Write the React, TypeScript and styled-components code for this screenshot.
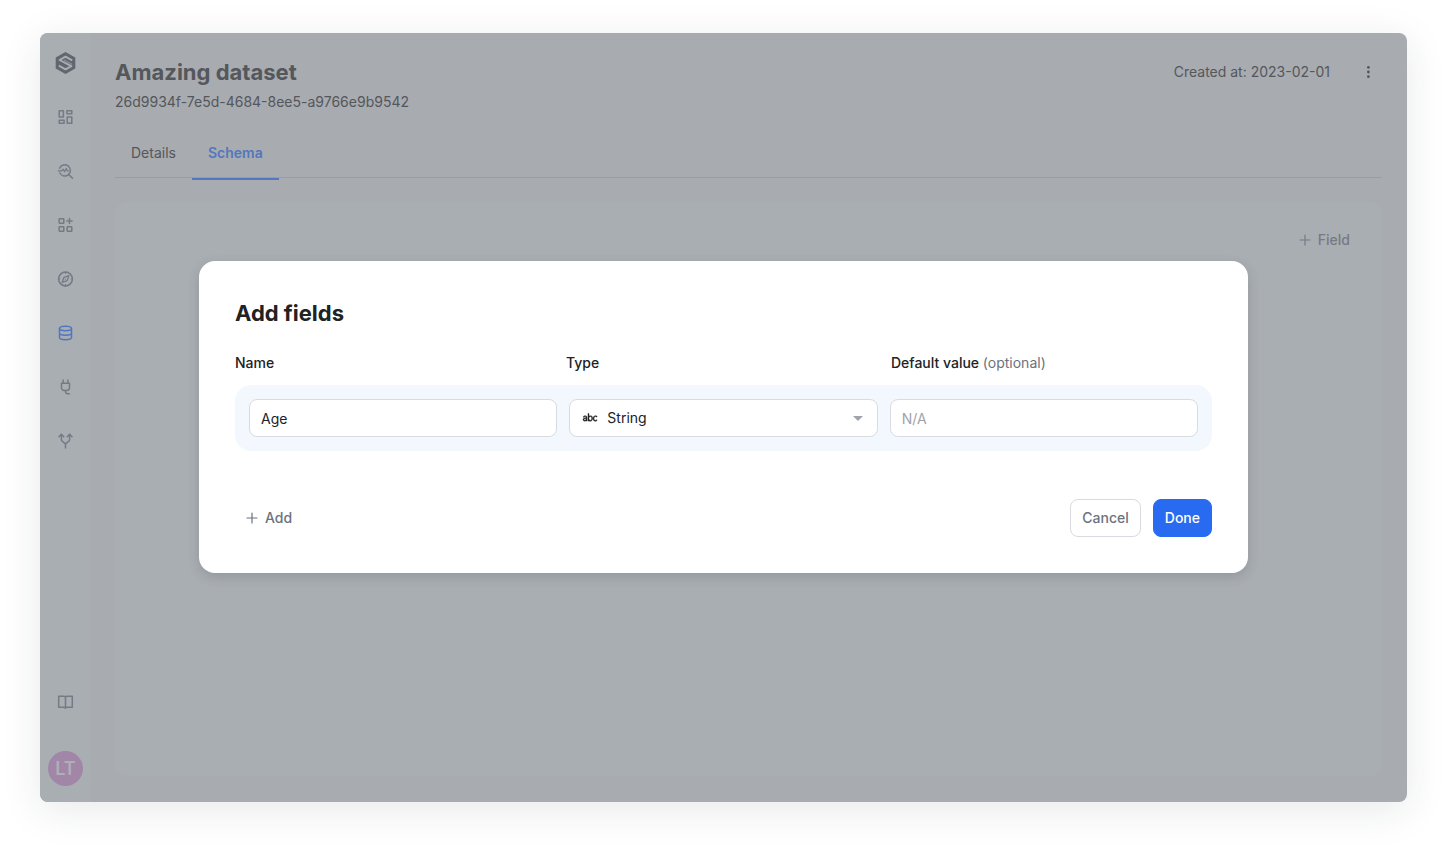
import React, { useState } from "react";
import styled, { createGlobalStyle, css } from "styled-components";
import { VscSymbolKey } from "react-icons/vsc";

const color = {
  ink: "#202224",
  muted: "#6b727d",
  faint: "#9fa3ab",
  border: "#d9dbe0",
  primary: "#286bf0",
  rowTint: "#f3f8fe",
  dimCanvas: "#a8abb0",
  dimSurface: "#a9aeb2",
  dimInk: "#54575b",
  dimMuted: "#757a85",
  dimLine: "#999ca3",
  dimPrimary: "#5377be",
};

const GlobalStyle = createGlobalStyle`
  *, *::before, *::after { box-sizing: border-box; }
  body {
    margin: 0;
    background: #fff;
    color: ${color.ink};
    font-family: Inter, "Liberation Sans", sans-serif;
    font-size: 14px;
    line-height: 20px;
    font-optical-sizing: none;
    -webkit-font-smoothing: antialiased;
  }
  button, input, select { font: inherit; }
`;

const Page = styled.div`
  min-height: 100vh;
  padding: 33px 40px 47px;
  display: flex;
`;

const Window = styled.div`
  position: relative;
  flex: 1;
  display: flex;
  border-radius: 8px;
  background: ${color.dimCanvas};
  color: ${color.dimInk};
  box-shadow: 0 8px 40px rgba(30, 35, 50, 0.1);
`;

const Sidebar = styled.nav`
  width: 51px;
  flex: none;
  display: flex;
  flex-direction: column;
  align-items: center;
  padding: 3px 0 16px;
  border-radius: 8px 0 0 8px;
  background: ${color.dimSurface};
`;

const SideLink = styled.a<{ $active?: boolean }>`
  display: flex;
  align-items: center;
  justify-content: center;
  width: 100%;
  height: 54px;
  color: ${(p) => (p.$active ? color.dimPrimary : color.dimMuted)};
`;

const LogoLink = styled(SideLink)`
  color: #62666f;
`;

const SidebarFoot = styled.div`
  width: 100%;
  margin-top: auto;
  display: flex;
  flex-direction: column;
  align-items: center;
  gap: 22px;
`;

const Avatar = styled.button`
  width: 35px;
  height: 35px;
  padding: 0;
  border: 0;
  border-radius: 50%;
  background: #a186a7;
  color: #b0aeb8;
  font-size: 18px;
  font-weight: 600;
`;

const Main = styled.main`
  flex: 1;
  min-width: 0;
  display: flex;
  flex-direction: column;
  padding: 24px 25px 26px 24px;
`;

const PageHeader = styled.header`
  display: flex;
  justify-content: space-between;
  align-items: flex-start;
`;

const PageTitle = styled.h1`
  margin: 0;
  font-size: 22px;
  line-height: 30px;
  font-weight: 700;
`;

const DatasetId = styled.p`
  margin: 5px 0 0;
`;

const HeaderMeta = styled.div`
  display: flex;
  align-items: center;
  gap: 24px;
  height: 30px;
`;

const MenuButton = styled.button`
  width: 28px;
  height: 28px;
  padding: 0;
  border: 0;
  background: none;
  color: inherit;
  display: flex;
  align-items: center;
  justify-content: center;
`;

const Tabs = styled.div`
  display: flex;
  margin-top: 17px;
  border-bottom: 1px solid ${color.dimLine};
`;

const Tab = styled.button<{ $active?: boolean }>`
  position: relative;
  height: 48px;
  padding: 0 16px;
  border: 0;
  background: none;
  color: inherit;
  ${(p) =>
    p.$active &&
    css`
      color: ${color.dimPrimary};
      font-weight: 600;
      &::after {
        content: "";
        position: absolute;
        left: 0;
        right: 0;
        bottom: -3px;
        height: 2px;
        background: ${color.dimPrimary};
      }
    `}
`;

const Card = styled.section`
  flex: 1;
  display: flex;
  justify-content: flex-end;
  align-items: flex-start;
  margin-top: 24px;
  padding: 19px 21px;
  border-radius: 12px;
  background: ${color.dimSurface};
`;

const Button = styled.button<{ $kind: "text" | "outline" | "primary" }>`
  display: flex;
  align-items: center;
  gap: 7px;
  height: 38px;
  padding: 0 ${(p) => (p.$kind === "text" ? 10 : 11)}px;
  border: 1px solid transparent;
  border-radius: 8px;
  font-weight: 500;
  background: none;
  color: ${color.muted};
  ${(p) =>
    p.$kind === "outline" &&
    css`
      background: #fff;
      border-color: ${color.border};
    `}
  ${(p) =>
    p.$kind === "primary" &&
    css`
      background: ${color.primary};
      border-color: ${color.primary};
      color: #fff;
    `}
`;

const DimButton = styled(Button)`
  color: ${color.dimMuted};
`;

const Overlay = styled.div`
  position: absolute;
  inset: 0;
  display: flex;
  align-items: center;
  justify-content: center;
  padding: 0 24px 1px;
`;

const Dialog = styled.form`
  width: 100%;
  max-width: 1049px;
  padding: 36px;
  border-radius: 16px;
  background: #fff;
  color: ${color.ink};
  box-shadow: 0 4px 12px rgba(50, 55, 75, 0.18);
`;

const DialogTitle = styled.h2`
  margin: 0;
  font-size: 22px;
  line-height: 32px;
  font-weight: 700;
`;

const Labels = styled.div`
  display: grid;
  grid-template-columns: 331fr 325fr 321fr;
  margin: 24px 0 12px;
  font-weight: 500;
`;

const Optional = styled.span`
  color: ${color.muted};
  font-weight: 400;
`;

const FieldRow = styled.div`
  display: grid;
  grid-template-columns: repeat(3, 1fr);
  gap: 12px;
  padding: 14px;
  border-radius: 16px;
  background: ${color.rowTint};
`;

const control = css`
  width: 100%;
  height: 38px;
  border: 1px solid ${color.border};
  border-radius: 8px;
  background: #fff;
  color: ${color.ink};
  outline: none;
`;

const TextInput = styled.input`
  ${control}
  padding: 0 11px;
  &::placeholder {
    color: ${color.faint};
    opacity: 1;
  }
`;

const SelectBox = styled.div`
  position: relative;
`;

const Select = styled.select`
  ${control}
  padding: 0 36px 0 37px;
  appearance: none;
`;

const SelectIcon = styled.span<{ $side: "left" | "right" }>`
  position: absolute;
  top: 0;
  bottom: 0;
  ${(p) => (p.$side === "left" ? "left: 13px;" : "right: 15px;")}
  display: flex;
  align-items: center;
  pointer-events: none;
  color: ${(p) => (p.$side === "left" ? color.ink : color.faint)};
`;

const TypeIcon = styled(VscSymbolKey)`
  path {
    stroke: currentColor;
    stroke-width: 0.4px;
  }
`;

const DialogFooter = styled.div`
  display: flex;
  justify-content: space-between;
  margin-top: 48px;
`;

const Actions = styled.div`
  display: flex;
  gap: 12px;
`;

const Glyph = ({ children }: { children: React.ReactNode }) => (
  <svg
    width="17"
    height="16"
    viewBox="-0.5 0 17 16"
    fill="none"
    stroke="currentColor"
    strokeWidth="1.5"
    strokeLinecap="round"
    strokeLinejoin="round"
    aria-hidden="true"
  >
    {children}
  </svg>
);

const Logo = () => (
  <svg width="21" height="22" viewBox="0 0 21 22" aria-hidden="true">
    <path d="M10.5 0L20.3 5.4v11.2L10.5 22 .7 16.6V5.4z" fill="currentColor" />
    <path
      d="M17.200 8.300L10.500 4.600 4.600 8l11.800 6.100-5.900 3.300-6.700-3.700"
      fill="none"
      stroke={color.dimSurface}
      strokeWidth="1.900"
      strokeLinejoin="round"
    />
    <path d="M8.900 7.900l8.200 4.400" fill="none" stroke={color.dimSurface} strokeWidth="0.700" />
  </svg>
);

const Plus = () => (
  <svg width="12" height="12" viewBox="0 0 12 12" aria-hidden="true">
    <path d="M6 1v10M1 6h10" stroke="currentColor" strokeWidth="1.2" strokeLinecap="round" />
  </svg>
);

const navItems = [
  {
    name: "Dashboard",
    icon: (
      <>
        <rect x="1.7" y="1.7" width="4.2" height="6.2" />
        <rect x="9.4" y="1.7" width="4.9" height="3" />
        <rect x="1.7" y="11.2" width="4.9" height="3.1" />
        <rect x="9.7" y="8.1" width="4.6" height="6.2" />
      </>
    ),
  },
  {
    name: "Explore",
    icon: (
      <>
        <path d="M2.1 5.2a5.6 5.6 0 1 1 .2 4.8M11.300 11.600l3.700 3.600" />
        <path d="M.8 7.800h3.300L5.700 6.300l1.400 2.500 1.700-3.300 1 2.300h1.100" strokeWidth="1.300" />
      </>
    ),
  },
  {
    name: "Apps",
    icon: (
      <>
        <rect x="1.700" y="1.700" width="4.600" height="4.600" rx="0.600" />
        <rect x="1.700" y="9.700" width="4.600" height="4.600" rx="0.600" />
        <rect x="9.700" y="9.700" width="4.600" height="4.600" rx="0.600" />
        <path d="M12 1.400v5.200M9.400 4h5.200" />
      </>
    ),
  },
  {
    name: "Discover",
    icon: (
      <>
        <circle cx="8" cy="8" r="6.900" />
        <path d="M11.300 4.700L9.700 9.600 4.700 11.300 6.400 6.400z" strokeWidth="1.300" />
        <path d="M8 1v1.300M8 13.700V15M1 8h1.300M13.700 8H15M8 8v.1" strokeWidth="1.200" />
      </>
    ),
  },
  {
    name: "Datasets",
    active: true,
    icon: (
      <>
        <ellipse cx="8" cy="3.500" rx="6" ry="2.200" />
        <path d="M2 3.500v9c0 1.200 2.700 2.200 6 2.200s6-1 6-2.200v-9M2 8c0 1.200 2.700 2.200 6 2.200s6-1 6-2.200" />
      </>
    ),
  },
  {
    name: "Connections",
    icon: (
      <>
        <path d="M5.600 1v3.300M10.400 1v3.300M4 4.300h8v4.500a2.700 2.700 0 0 1-2.700 2.700H6.700A2.700 2.700 0 0 1 4 8.800z" />
        <path d="M8 11.500v1.300a1.900 1.900 0 0 0 1.900 1.900h1.900" />
      </>
    ),
  },
  {
    name: "Pipelines",
    icon: (
      <>
        <path d="M8 15v-4.200L4.600 8.200a1.800 1.800 0 0 1-.7-1.400V1.400M8 10.800l3.400-2.600a1.800 1.800 0 0 0 .7-1.400V1.400" />
        <path d="M1.500 3.800l2.400-2.400 2.400 2.400M9.700 3.800l2.400-2.400 2.400 2.400" />
      </>
    ),
  },
];

export default function App() {
  const [name, setName] = useState("Age");

  return (
    <>
      <GlobalStyle />
      <Page>
        <Window>
          <Sidebar aria-label="Main">
            <LogoLink href="#home" aria-label="Home">
              <Logo />
            </LogoLink>
            {navItems.map((item) => (
              <SideLink key={item.name} href={`#${item.name.toLowerCase()}`} aria-label={item.name} $active={item.active}>
                <Glyph>{item.icon}</Glyph>
              </SideLink>
            ))}
            <SidebarFoot>
              <SideLink href="#docs" aria-label="Documentation">
                <Glyph>
                  <path d="M8 3.300c-.3-.6-.9-1-1.600-1H1.200v11h5c.8 0 1.500.3 1.800.8.3-.5 1-.8 1.800-.8h5v-11H9.600c-.7 0-1.300.4-1.600 1zM8 3.300v10.800" />
                </Glyph>
              </SideLink>
              <Avatar type="button">LT</Avatar>
            </SidebarFoot>
          </Sidebar>

          <Main>
            <PageHeader>
              <div>
                <PageTitle>Amazing dataset</PageTitle>
                <DatasetId>26d9934f-7e5d-4684-8ee5-a9766e9b9542</DatasetId>
              </div>
              <HeaderMeta>
                <span>Created at: 2023-02-01</span>
                <MenuButton type="button" aria-label="More actions">
                  <svg width="4" height="14" viewBox="0 0 4 14" fill="currentColor" aria-hidden="true">
                    <circle cx="2.400" cy="2.300" r="1.400" />
                    <circle cx="2.400" cy="7" r="1.400" />
                    <circle cx="2.400" cy="11.700" r="1.400" />
                  </svg>
                </MenuButton>
              </HeaderMeta>
            </PageHeader>
            <Tabs role="tablist">
              <Tab type="button" role="tab" aria-selected="false">
                Details
              </Tab>
              <Tab type="button" role="tab" aria-selected="true" $active>
                Schema
              </Tab>
            </Tabs>
            <Card>
              <DimButton type="button" $kind="text">
                <Plus />
                Field
              </DimButton>
            </Card>
          </Main>

          <Overlay>
            <Dialog role="dialog" aria-modal="true" aria-labelledby="dialog-title" onSubmit={(e) => e.preventDefault()}>
              <DialogTitle id="dialog-title">Add fields</DialogTitle>
              <Labels>
                <label htmlFor="field-name">Name</label>
                <label htmlFor="field-type">Type</label>
                <label htmlFor="field-default">
                  Default value <Optional>(optional)</Optional>
                </label>
              </Labels>
              <FieldRow>
                <TextInput id="field-name" value={name} onChange={(e) => setName(e.target.value)} />
                <SelectBox>
                  <Select id="field-type" defaultValue="string">
                    <option value="string">String</option>
                  </Select>
                  <SelectIcon $side="left">
                    <TypeIcon size={16} />
                  </SelectIcon>
                  <SelectIcon $side="right">
                    <svg width="10" height="5" viewBox="0 0 10 5" aria-hidden="true">
                      <path d="M0 0h10L5 5z" fill="currentColor" />
                    </svg>
                  </SelectIcon>
                </SelectBox>
                <TextInput id="field-default" placeholder="N/A" />
              </FieldRow>
              <DialogFooter>
                <Button type="button" $kind="text">
                  <Plus />
                  Add
                </Button>
                <Actions>
                  <Button type="button" $kind="outline">
                    Cancel
                  </Button>
                  <Button type="submit" $kind="primary">
                    Done
                  </Button>
                </Actions>
              </DialogFooter>
            </Dialog>
          </Overlay>
        </Window>
      </Page>
    </>
  );
}
